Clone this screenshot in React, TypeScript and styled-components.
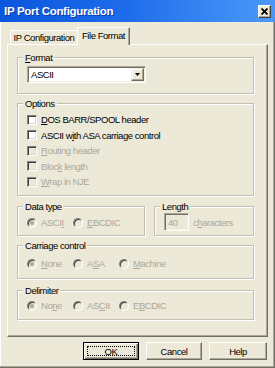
import React from 'react';
import styled, { createGlobalStyle } from 'styled-components';

const Global = createGlobalStyle`
  html, body { margin: 0; padding: 0; background: #ECE9D8; }
  body { font-family: "Liberation Sans", Arial, sans-serif; }
  * { box-sizing: border-box; }
`;

const Window = styled.div`
  width: 275px;
  height: 368px;
  display: flex;
  flex-direction: column;
  background: #ECE9D8;
  font-size: 9.5px;
  letter-spacing: -0.45px;
  color: #000;
  overflow: hidden;
  box-shadow: inset -1px -1px 0 #716F64, inset -2px -2px 0 #ACA899, inset 1px 0 0 #fff;
`;

const TitleBar = styled.div`
  height: 22px;
  flex: none;
  display: flex;
  align-items: center;
  justify-content: space-between;
  padding: 0 4px 0 4px;
  background: linear-gradient(to right, #0A56DE 0%, #1E6BEA 45%, #3F8EF6 85%, #4B98F9 100%);
`;

const TitleText = styled.div`
  color: #fff;
  font-weight: bold;
  font-size: 11.5px;
  letter-spacing: -0.3px;
  text-shadow: 1px 1px 0 #0A3AA8;
`;

const CloseButton = styled.div`
  width: 13px;
  height: 13px;
  margin-top: 1px;
  display: flex;
  align-items: center;
  justify-content: center;
  background: #ECE9D8;
  border: 1px solid;
  border-color: #fff #404040 #404040 #fff;
  box-shadow: inset -1px -1px 0 #ACA899;
`;

const Content = styled.div`
  display: flex;
  flex-direction: column;
  padding: 5px 0 0 7px;
`;

const TabStrip = styled.div`
  display: flex;
  align-items: flex-end;
  height: 18px;
  padding-left: 3px;
  margin-bottom: -1px;
  position: relative;
  z-index: 1;
`;

const Tab = styled.div<{ $active?: boolean; $w: number }>`
  width: ${p => p.$w}px;
  height: ${p => (p.$active ? 18 : 14)}px;
  margin-bottom: ${p => (p.$active ? 0 : 1)}px;
  display: flex;
  align-items: center;
  justify-content: center;
  background: #ECE9D8;
  border-top: 1px solid #fff;
  border-left: 1px solid #fff;
  border-right: ${p => (p.$active ? '1px solid #716F64' : 'none')};
  box-shadow: ${p => (p.$active ? 'inset -1px 0 0 #ACA899' : 'none')};
  padding-bottom: ${p => (p.$active ? 2 : 0)}px;
`;

const Panel = styled.div`
  width: 261px;
  height: 293px;
  display: flex;
  flex-direction: column;
  padding: 12px 0 0 9px;
  border: 1px solid;
  border-color: #fff #716F64 #716F64 #fff;
  box-shadow: inset -1px -1px 0 #ACA899;
`;

const GroupBox = styled.div<{ $w?: number; $h: number; $mt?: number; $pt: number }>`
  position: relative;
  width: ${p => p.$w ?? 237}px;
  height: ${p => p.$h}px;
  margin-top: ${p => p.$mt ?? 0}px;
  padding: ${p => p.$pt}px 0 0 9px;
  border: 1px solid #C2BFB0;
  box-shadow: inset 1px 1px 0 #fff, 1px 1px 0 #fff;
  flex: none;
`;

const Legend = styled.span`
  position: absolute;
  top: -6px;
  left: 5px;
  padding: 0 2px;
  line-height: 11px;
  background: #ECE9D8;
  color: #000;
`;

const Mn = styled.span`
  text-decoration: underline;
  text-underline-offset: 1px;
`;

const Select = styled.div`
  width: 119px;
  height: 17px;
  display: flex;
  align-items: center;
  justify-content: space-between;
  background: #fff;
  border: 1px solid;
  border-color: #ACA899 #fff #fff #ACA899;
  box-shadow: inset 1px 1px 0 #716F64, inset -1px -1px 0 #F1EFE2;
  padding: 1px 1px 1px 3px;
`;

const DropButton = styled.div`
  width: 13px;
  height: 13px;
  display: flex;
  align-items: center;
  justify-content: center;
  background: #ECE9D8;
  border: 1px solid;
  border-color: #F1EFE2 #716F64 #716F64 #F1EFE2;
  box-shadow: inset -1px -1px 0 #ACA899, inset 1px 1px 0 #fff;
`;

const CheckList = styled.div`
  display: flex;
  flex-direction: column;
`;

const CheckRow = styled.div<{ $disabled?: boolean }>`
  height: 15.5px;
  display: flex;
  align-items: center;
  gap: 4px;
  color: ${p => (p.$disabled ? '#ACA899' : '#000')};
`;

const CheckBox = styled.span<{ $disabled?: boolean }>`
  width: 10px;
  height: 10px;
  flex: none;
  background: ${p => (p.$disabled ? '#ECE9D8' : '#fff')};
  border: 1px solid;
  border-color: #808080 #fff #fff #808080;
  box-shadow: inset 1px 1px 0 #404040, inset -1px -1px 0 #DCD9C8;
`;

const Row = styled.div`
  display: flex;
  gap: 9px;
  margin-top: 10px;
`;

const RadioRow = styled.div`
  height: 13px;
  display: flex;
  align-items: center;
`;

const RadioItem = styled.div<{ $w?: number }>`
  width: ${p => (p.$w ? `${p.$w}px` : 'auto')};
  display: flex;
  align-items: center;
  gap: 4px;
  color: #ACA899;
`;

const Radio = styled.span<{ $checked?: boolean }>`
  width: 10px;
  height: 10px;
  flex: none;
  border-radius: 50%;
  background: #ECE9D8;
  border: 1px solid;
  border-color: #808080 #fff #fff #808080;
  box-shadow: inset 1px 1px 0 #404040;
  display: flex;
  align-items: center;
  justify-content: center;
  &::after {
    content: '';
    width: 4px;
    height: 4px;
    border-radius: 50%;
    background: ${p => (p.$checked ? '#ACA899' : 'transparent')};
  }
`;

const LengthRow = styled.div`
  display: flex;
  align-items: center;
  gap: 4px;
  color: #ACA899;
`;

const NumInput = styled.div`
  width: 25px;
  height: 18px;
  display: flex;
  align-items: center;
  padding-left: 3px;
  background: #ECE9D8;
  border: 1px solid;
  border-color: #ACA899 #fff #fff #ACA899;
  box-shadow: inset 1px 1px 0 #716F64, inset -1px -1px 0 #F1EFE2;
  color: #ACA899;
`;

const ButtonRow = styled.div`
  display: flex;
  justify-content: flex-end;
  gap: 7px;
  padding-right: 8px;
  margin-top: 5px;
`;

const Button = styled.div<{ $w: number; $default?: boolean }>`
  position: relative;
  width: ${p => p.$w}px;
  height: 18px;
  display: flex;
  align-items: center;
  justify-content: center;
  background: #ECE9D8;
  border: 1px solid;
  border-color: ${p => (p.$default ? '#000' : '#fff #716F64 #716F64 #fff')};
  box-shadow: ${p =>
    p.$default
      ? 'inset 1px 1px 0 #fff, inset -1px -1px 0 #716F64, inset -2px -2px 0 #ACA899'
      : 'inset -1px -1px 0 #ACA899'};
`;

const FocusRect = styled.span`
  position: absolute;
  inset: 3px;
  border: 1px dotted #000;
`;

const App: React.FC = () => (
  <Window>
    <Global />
    <TitleBar>
      <TitleText>IP Port Configuration</TitleText>
      <CloseButton>
        <svg width="7" height="7" viewBox="0 0 7 7">
          <path d="M0.5 0.5 L6.5 6.5 M6.5 0.5 L0.5 6.5" stroke="#000" strokeWidth="1.8" />
        </svg>
      </CloseButton>
    </TitleBar>
    <Content>
      <TabStrip>
        <Tab $w={67}>IP Configuration</Tab>
        <Tab $w={53} $active>File Format</Tab>
      </TabStrip>
      <Panel>
        <GroupBox $h={37} $pt={8}>
          <Legend><Mn>F</Mn>ormat</Legend>
          <Select>
            <span>ASCII</span>
            <DropButton>
              <svg width="5" height="3" viewBox="0 0 5 3">
                <path d="M0 0 H5 L2.5 3 Z" fill="#000" />
              </svg>
            </DropButton>
          </Select>
        </GroupBox>

        <GroupBox $h={93} $mt={9} $pt={8}>
          <Legend>Options</Legend>
          <CheckList>
            <CheckRow><CheckBox /><span><Mn>D</Mn>OS BARR/SPOOL header</span></CheckRow>
            <CheckRow><CheckBox /><span>ASCII w<Mn>i</Mn>th ASA carriage control</span></CheckRow>
            <CheckRow $disabled><CheckBox $disabled /><span><Mn>R</Mn>outing header</span></CheckRow>
            <CheckRow $disabled><CheckBox $disabled /><span>Bloc<Mn>k</Mn> length</span></CheckRow>
            <CheckRow $disabled><CheckBox $disabled /><span><Mn>W</Mn>rap in NJE</span></CheckRow>
          </CheckList>
        </GroupBox>

        <Row>
          <GroupBox $w={128} $h={30} $pt={9}>
            <Legend>Data type</Legend>
            <RadioRow>
              <RadioItem $w={46}><Radio $checked /><span>ASCI<Mn>I</Mn></span></RadioItem>
              <RadioItem><Radio /><span><Mn>E</Mn>BCDIC</span></RadioItem>
            </RadioRow>
          </GroupBox>
          <GroupBox $w={100} $h={30} $pt={6}>
            <Legend>Length</Legend>
            <LengthRow>
              <NumInput>40</NumInput>
              <span>c<Mn>h</Mn>aracters</span>
            </LengthRow>
          </GroupBox>
        </Row>

        <GroupBox $h={34} $mt={9} $pt={11}>
          <Legend>Carriage control</Legend>
          <RadioRow>
            <RadioItem $w={46}><Radio $checked /><span><Mn>N</Mn>one</span></RadioItem>
            <RadioItem $w={46}><Radio /><span>A<Mn>S</Mn>A</span></RadioItem>
            <RadioItem><Radio /><span><Mn>M</Mn>achine</span></RadioItem>
          </RadioRow>
        </GroupBox>

        <GroupBox $h={30} $mt={11} $pt={8}>
          <Legend>Delimiter</Legend>
          <RadioRow>
            <RadioItem $w={46}><Radio $checked /><span>No<Mn>n</Mn>e</span></RadioItem>
            <RadioItem $w={46}><Radio /><span>AS<Mn>C</Mn>II</span></RadioItem>
            <RadioItem><Radio /><span>E<Mn>B</Mn>CDIC</span></RadioItem>
          </RadioRow>
        </GroupBox>
      </Panel>
      <ButtonRow>
        <Button $w={56} $default><FocusRect />OK</Button>
        <Button $w={56}>Cancel</Button>
        <Button $w={58}>Help</Button>
      </ButtonRow>
    </Content>
  </Window>
);

export default App;
